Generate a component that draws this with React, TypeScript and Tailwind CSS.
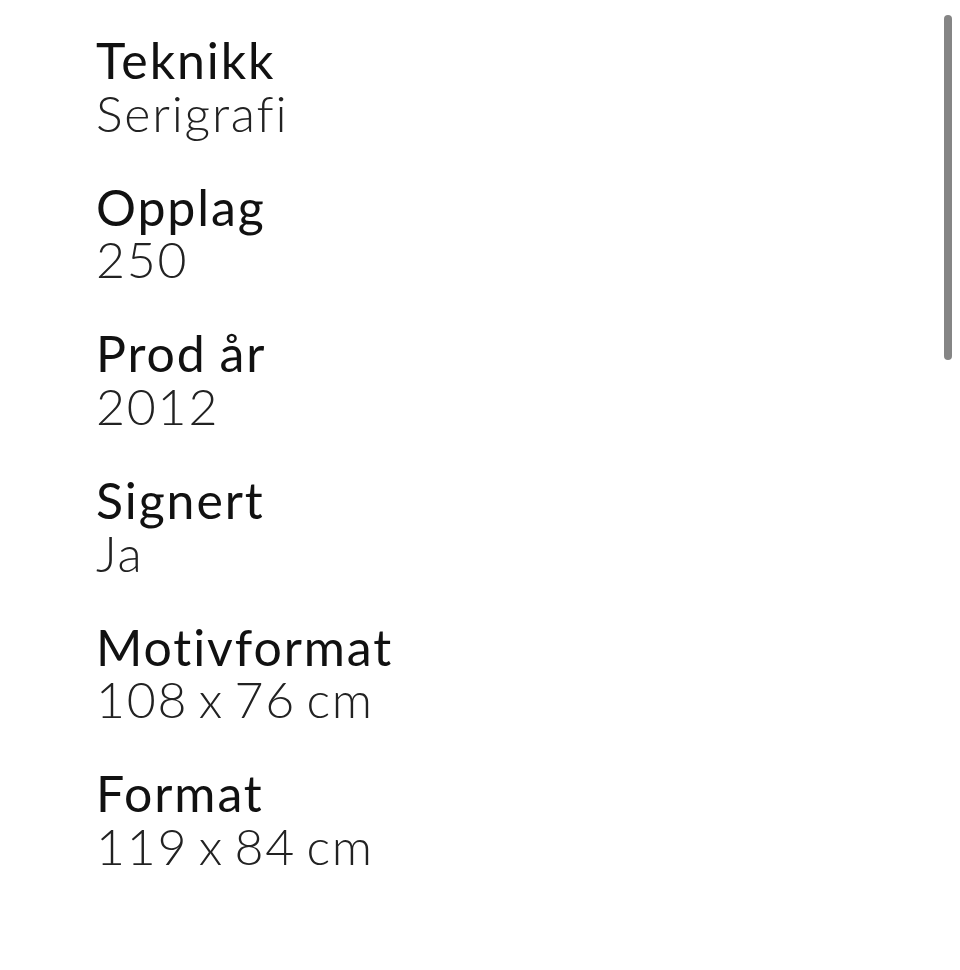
import React from "react";

const items: [string, string][] = [
  ["Teknikk", "Serigrafi"],
  ["Opplag", "250"],
  ["Prod år", "2012"],
  ["Signert", "Ja"],
  ["Motivformat", "108 x 76 cm"],
  ["Format", "119 x 84 cm"],
];

export default function App() {
  return (
    <div className="relative w-[960px] h-[970px] bg-white overflow-hidden" style={{ fontFamily: "Lato, 'Open Sans', sans-serif" }}>
      <div className="flex flex-col gap-[41.7px] pl-[96px] pt-[34px]">
        {items.map(([k, v]) => (
          <div key={k} className="flex flex-col">
            <div className="text-[50px] leading-[52.5px] font-normal tracking-[0.038em] [word-spacing:-2px] text-[#111]">{k}</div>
            <div className="text-[50px] leading-[52.5px] font-light tracking-[0.036em] [word-spacing:-5px] text-[#222]">{v}</div>
          </div>
        ))}
      </div>
      <div className="absolute left-[944px] top-[15px] w-[8px] h-[345px] rounded-full bg-[#858585]" />
    </div>
  );
}
